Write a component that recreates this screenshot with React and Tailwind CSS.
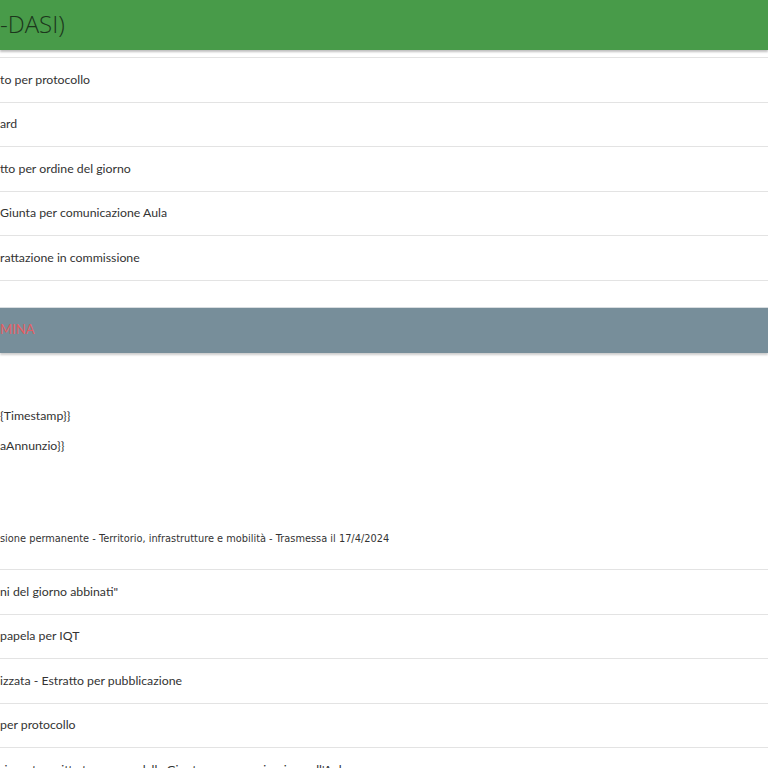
const topRows = [
  'to per protocollo',
  'ard',
  'tto per ordine del giorno',
  'Giunta per comunicazione Aula',
  'rattazione in commissione',
];

const bottomRows = [
  'ni del giorno abbinati"',
  'papela per IQT',
  'izzata - Estratto per pubblicazione',
  'per protocollo',
  "risposta scritta trasmessa dalla Giunta per comunicazione all'Aula",
];

function Row({ text }) {
  return (
    <div className="h-[44.5px] border-b border-[#e3e3e3] flex items-center">
      <span className="text-[12.3px] text-[#333]">{text}</span>
    </div>
  );
}

export default function App() {
  return (
    <div className="w-[768px] h-[768px] overflow-hidden bg-white font-['Lato','Open_Sans',sans-serif]">
      <header className="h-[50px] bg-[#489b49] flex items-center shadow-[0_2px_2px_rgba(0,0,0,0.25)] relative">
        <h1 className="text-[24px] font-light text-[#1c361c] leading-none -mt-[2px] font-['Open_Sans',sans-serif]">-DASI)</h1>
      </header>

      <div className="mt-[7px] border-t border-[#e3e3e3]">
        {topRows.map((t) => (
          <Row key={t} text={t} />
        ))}
      </div>

      <div className="mt-[26px] h-[46px] bg-[#778e9a] border-t border-[#d8dde0] shadow-[0_2px_2px_rgba(0,0,0,0.2)] flex items-center">
        <span className="text-[13px] text-[#e35e63]">MINA</span>
      </div>

      <div className="pt-[49px]">
        <p className="text-[12.3px] text-[#333] h-[30px] flex items-center">{'{Timestamp}}'}</p>
        <p className="text-[12.3px] text-[#333] h-[30px] flex items-center">{'aAnnunzio}}'}</p>
      </div>

      <p className="mt-[72px] text-[9.8px] text-[#333] font-['DejaVu_Sans',sans-serif] leading-none">
        sione permanente - Territorio, infrastrutture e mobilità - Trasmessa il 17/4/2024
      </p>

      <div className="mt-[26px] border-t border-[#e3e3e3]">
        {bottomRows.map((t) => (
          <Row key={t} text={t} />
        ))}
      </div>
    </div>
  );
}
